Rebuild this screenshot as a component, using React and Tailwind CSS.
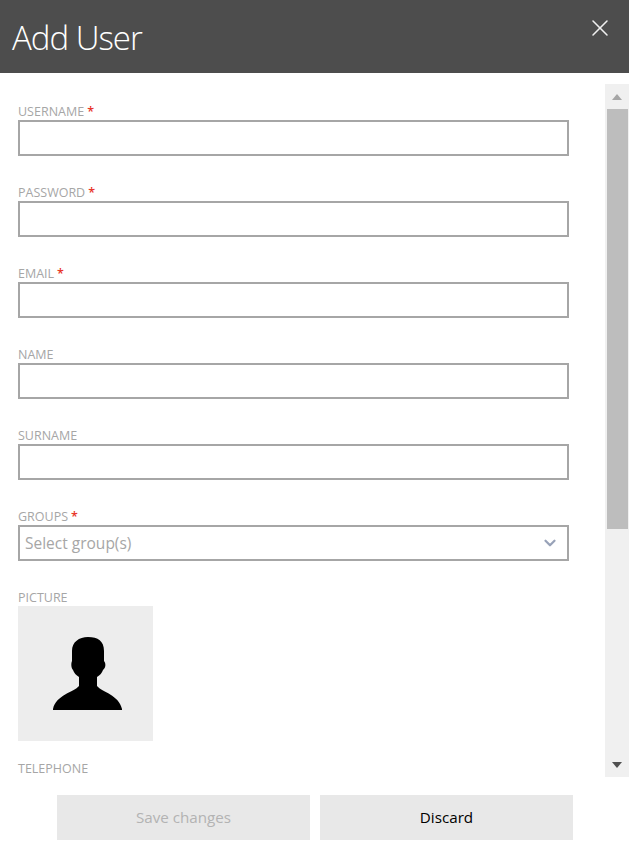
import { ChevronDown, X } from 'lucide-react';

const fields = [
  { label: 'USERNAME', required: true },
  { label: 'PASSWORD', required: true },
  { label: 'EMAIL', required: true },
  { label: 'NAME' },
  { label: 'SURNAME' },
];

const labelClass = "block h-[18px] text-[12.5px] leading-[20px] text-[#a6a6a6]";
const boxClass = "w-[551px] h-9 border-2 border-[#a6a6a6] bg-white";

function FieldLabel({ label, required }) {
  return (
    <label className={labelClass}>
      {label}
      {required && <span className="ml-[3px] font-semibold text-[#e8352a]">*</span>}
    </label>
  );
}

export default function App() {
  return (
    <div className="w-[629px] h-[857px] bg-white overflow-hidden font-['Open_Sans','Noto_Sans',sans-serif]">
      {/* HEADER */}
      <header className="h-[73px] bg-[#4d4d4d] flex items-center justify-between pl-3 pr-[15px]">
        <h1 className="mt-[2px] text-[33px] leading-[46px] tracking-[-1px] font-light text-white">Add User</h1>
        <button className="mb-[18px] text-[#f0f0f0]">
          <X size={28} strokeWidth={1.3} />
        </button>
      </header>

      <div className="mt-[11px] flex h-[693px]">
        {/* FORM */}
        <div className="w-[605px] overflow-hidden pl-[18px] pt-[18px]">
          {fields.map((f) => (
            <div key={f.label} className="mb-[27px]">
              <FieldLabel label={f.label} required={f.required} />
              <input className={`${boxClass} block outline-none`} />
            </div>
          ))}

          <div className="mb-[27px]">
            <FieldLabel label="GROUPS" required />
            <div className={`${boxClass} flex items-center justify-between pl-[5px] pr-[8px]`}>
              <span className="text-[15.5px] leading-[24px] text-[#a6a6a6]">Select group(s)</span>
              <ChevronDown size={18} strokeWidth={3} className="text-[#98a2b8]" />
            </div>
          </div>

          <FieldLabel label="PICTURE" />
          <div className="w-[135px] h-[135px] bg-[#ededed] flex items-center justify-center">
            <svg width="70" height="74" viewBox="0 0 70 74" className="ml-[5px] mt-px">
              <path
                fill="#000"
                d="M35 0C45 0 51 4 51 14L51 24C53 26 53 31 50 33C49 36 47 38 44 40L44 49C49 55 66 58 69 72L69 73L0 73L0 72C3 58 21 55 26 49L26 40C23 38 21 36 20 33C18 31 18 26 19 24L19 14C19 5 26 0 35 0Z"
              />
            </svg>
          </div>

          <div className="mt-[18px]">
            <FieldLabel label="TELEPHONE" />
          </div>
        </div>

        {/* SCROLLBAR */}
        <div className="w-6 bg-[#f0f0f0] flex flex-col items-center">
          <div className="h-[25px] flex items-center justify-center">
            <div className="w-0 h-0 border-x-[5px] border-x-transparent border-b-[6px] border-b-[#a6a6a6]" />
          </div>
          <div className="ml-px w-[21px] h-[420px] bg-[#bdbdbd]" />
          <div className="mt-auto h-[25px] flex items-center justify-center">
            <div className="w-0 h-0 border-x-[5px] border-x-transparent border-t-[6px] border-t-[#505050]" />
          </div>
        </div>
      </div>

      {/* ACTIONS */}
      <div className="mt-[18px] pl-[57px] flex gap-[10px]">
        <button className="w-[253px] h-[45px] bg-[#e8e8e8] text-[15.2px] text-[#b3b3b3]">Save changes</button>
        <button className="w-[253px] h-[45px] bg-[#e8e8e8] text-[15.2px] text-black">Discard</button>
      </div>
    </div>
  );
}
